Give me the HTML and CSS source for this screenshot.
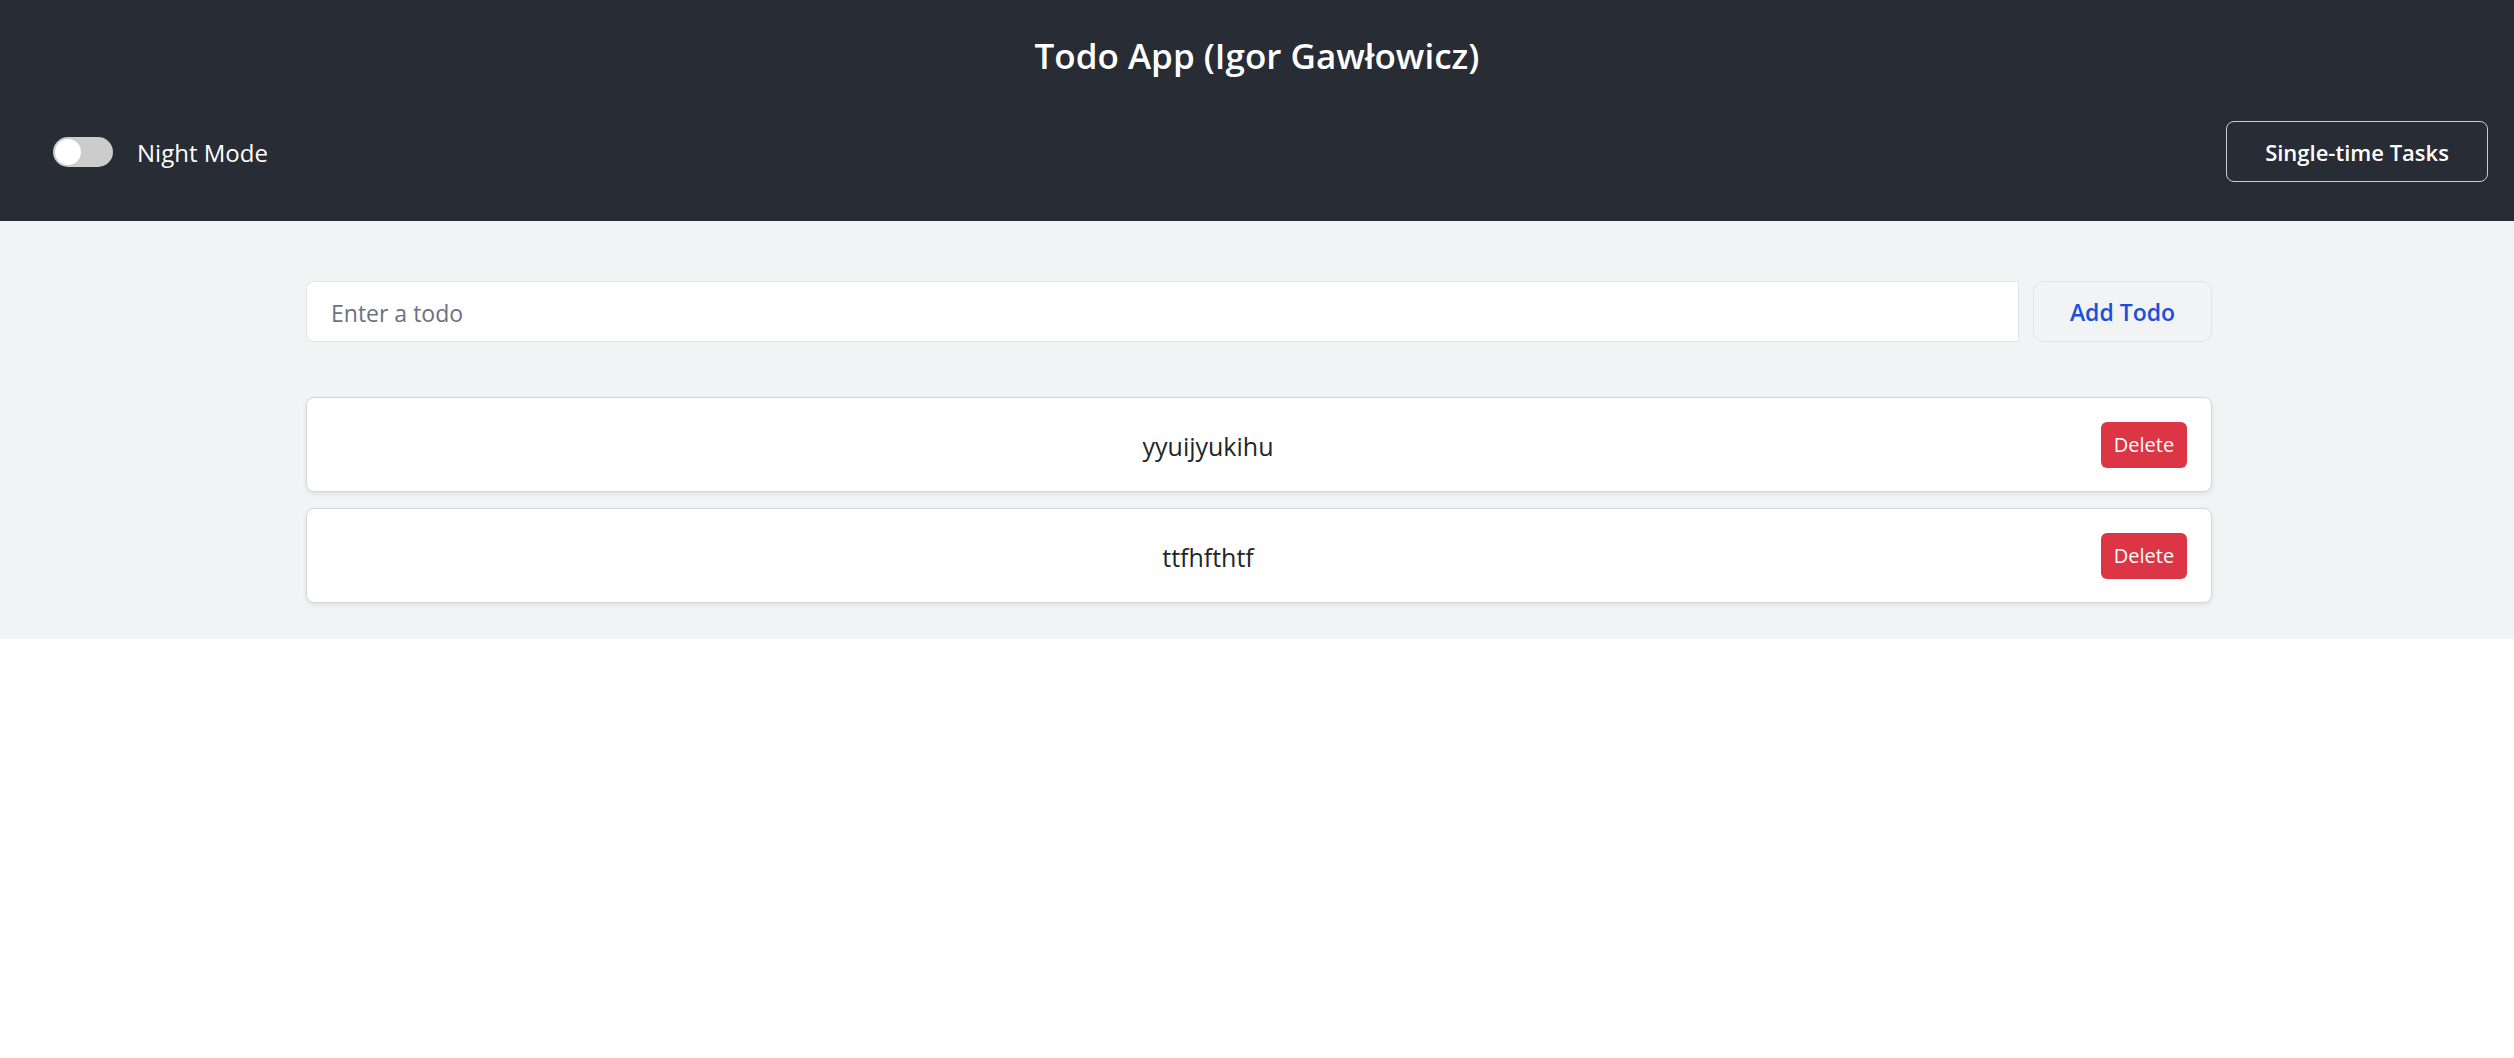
FILE: index.html
```html
<!DOCTYPE html>
<html lang="en">
<head>
<meta charset="utf-8">
<title>Todo App</title>
<link rel="stylesheet" href="styles.css">
</head>
<body>
<header class="app-header">
  <h1 class="title">Todo App (Igor Gawłowicz)</h1>
  <div class="header-bar">
    <label class="night">
      <span class="switch"><span class="knob"></span></span>
      <span class="night-label">Night Mode</span>
    </label>
    <button class="tasks-btn" type="button">Single-time Tasks</button>
  </div>
</header>
<main class="content">
  <div class="container">
    <form class="add-form">
      <input class="todo-input" type="text" placeholder="Enter a todo">
      <button class="add-btn" type="button">Add Todo</button>
    </form>
    <ul class="todo-list">
      <li class="todo-card"><span class="todo-text">yyuijyukihu</span><button class="delete-btn" type="button">Delete</button></li>
      <li class="todo-card"><span class="todo-text">ttfhfthtf</span><button class="delete-btn" type="button">Delete</button></li>
    </ul>
  </div>
</main>
</body>
</html>
```
FILE: styles.css
```css
* { box-sizing: border-box; }
html, body { margin: 0; padding: 0; background: #ffffff; }
body { font-family: "Open Sans", "Noto Sans", sans-serif; }

.app-header {
  background: #282c34;
  color: #ffffff;
  height: 221px;
  padding-top: 32px;
}
.title {
  margin: 0;
  text-align: center;
  font-size: 35px;
  line-height: 48px;
  font-weight: 600;
}
.header-bar {
  margin-top: 41px;
  display: flex;
  align-items: center;
  justify-content: space-between;
  padding: 0 26px 0 53px;
}
.night {
  display: flex;
  align-items: center;
  gap: 24px;
}
.switch {
  width: 60px;
  height: 30px;
  border-radius: 15px;
  background: #cccccc;
  padding: 2px;
  display: flex;
  align-items: center;
}
.knob {
  width: 26px;
  height: 26px;
  border-radius: 50%;
  background: #ffffff;
}
.night-label {
  font-size: 24px;
  line-height: 30px;
  padding-top: 2px;
}
.tasks-btn {
  width: 262px;
  height: 61px;
  background: transparent;
  border: 1px solid #c9ccd1;
  border-radius: 8px;
  color: #ffffff;
  font-family: inherit;
  font-size: 22px;
  font-weight: 600;
}

.content {
  background: #f2f3f5;
  padding: 60px 0 36px;
}
.container {
  width: 1906px;
  margin-left: calc(50% - 951px);
}
.add-form {
  display: flex;
  gap: 14px;
  margin: 0;
}
.todo-input {
  flex: 1;
  height: 61px;
  border: 1px solid #e1e3e7;
  border-radius: 8px 0 0 8px;
  background: #ffffff;
  padding: 2px 24px 0;
  font-family: inherit;
  font-size: 23px;
  color: #212529;
  outline: none;
}
.todo-input::placeholder { color: #6b7280; }
.add-btn {
  width: 179px;
  height: 61px;
  padding-top: 2px;
  background: #f2f3f5;
  border: 1px solid #e1e3e7;
  border-radius: 10px;
  color: #1d4ed8;
  font-family: inherit;
  font-size: 23px;
  font-weight: 600;
}
.todo-list {
  list-style: none;
  margin: 55px 0 0;
  padding: 0;
  display: flex;
  flex-direction: column;
  gap: 16px;
}
.todo-card {
  height: 95px;
  display: flex;
  align-items: center;
  gap: 16px;
  padding: 0 24px;
  background: #ffffff;
  border: 1px solid #d6d6d6;
  border-radius: 8px;
  box-shadow: 0 2px 5px rgba(0, 0, 0, 0.08);
}
.todo-text {
  flex: 1;
  text-align: center;
  font-size: 25px;
  color: #212529;
  padding-top: 2px;
}
.delete-btn {
  width: 86px;
  height: 46px;
  background: #dc3545;
  border: none;
  border-radius: 6px;
  color: #ffffff;
  font-family: inherit;
  font-size: 20px;
}
```
